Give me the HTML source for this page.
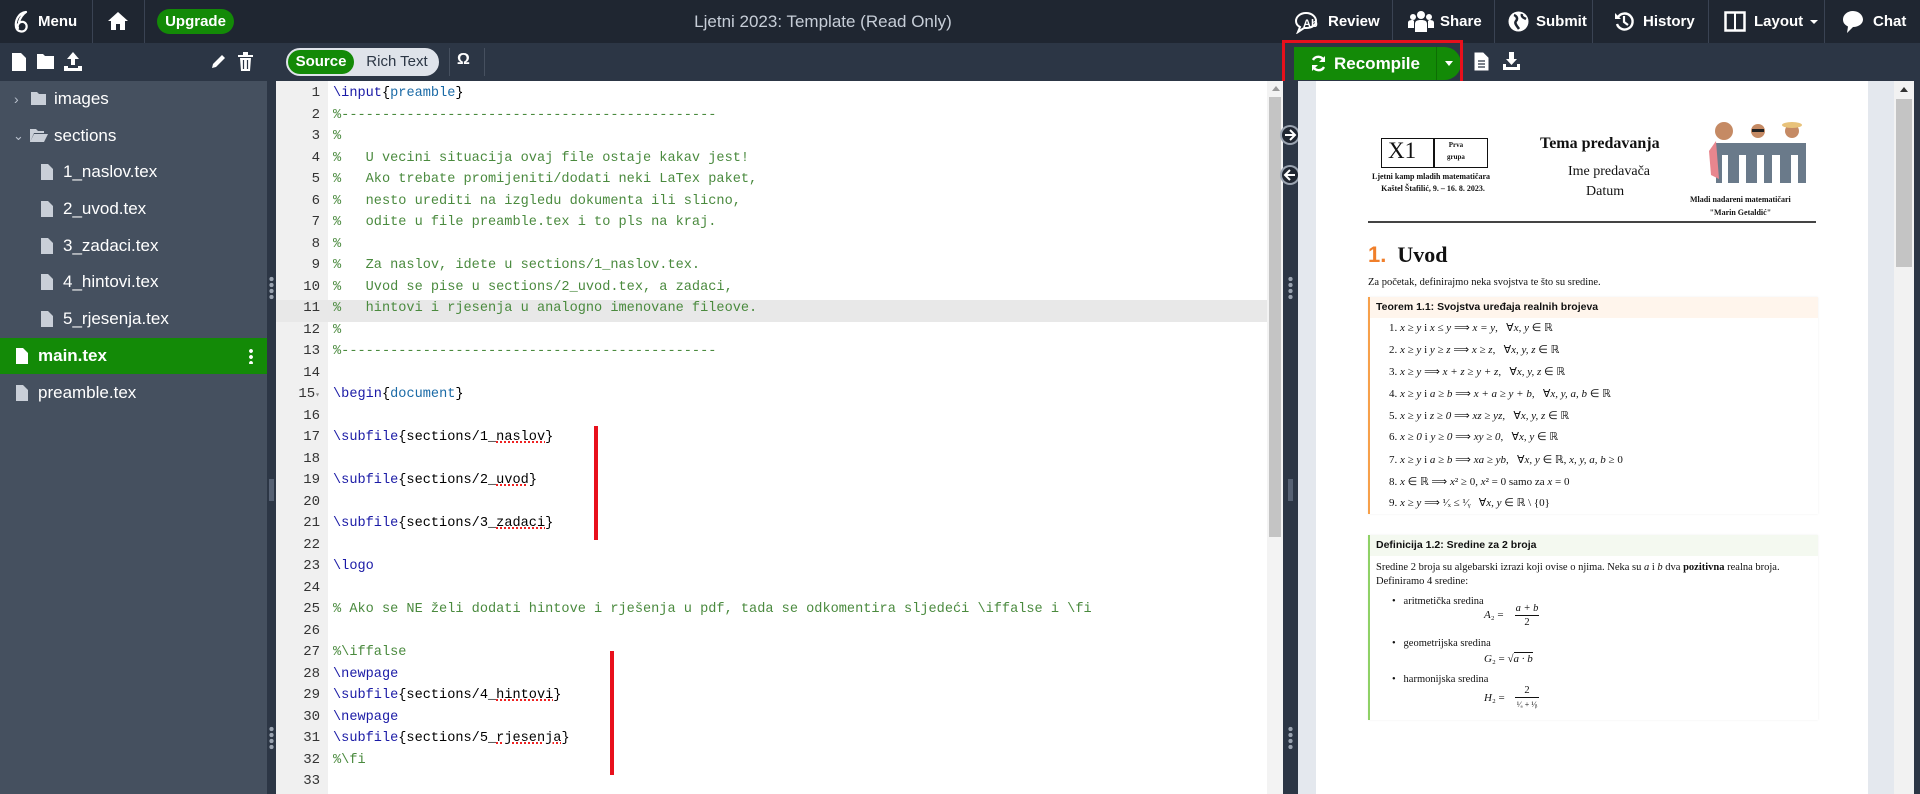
<!DOCTYPE html>
<html><head><meta charset="utf-8"><style>
*{margin:0;padding:0;box-sizing:border-box}
body{width:1920px;height:794px;overflow:hidden;font-family:"Liberation Sans","DejaVu Sans",sans-serif;background:#2c3645;position:relative}
.abs{position:absolute}
#top{left:0;top:0;width:1920px;height:43px;background:#1f2631;color:#fff}
#top .t{position:absolute;top:0;height:43px;line-height:43px;font-size:15px;font-weight:bold}
.sep{position:absolute;top:0;width:1px;height:43px;background:#3a4353}
#tb{left:0;top:43px;width:1920px;height:38px;background:#2c3645}
#side{left:0;top:81px;width:267px;height:713px;background:#45505f;color:#fff}
.row{position:absolute;left:0;width:267px;height:36px;line-height:36px;font-size:17px}
#handle{left:267px;top:81px;width:9px;height:713px;background:#2c3645}
#gut{left:276px;top:81px;width:52px;height:713px;background:#f0f0f0}
#ed{left:328px;top:81px;width:939px;height:713px;background:#fff}
.ln{position:absolute;left:276px;width:44px;text-align:right;font-family:"Liberation Mono",monospace;font-size:14px;color:#333;height:21.5px;line-height:21.5px}
.cl{position:absolute;left:333px;font-family:"Liberation Mono",monospace;font-size:13.6px;height:21.5px;line-height:21.5px;white-space:pre;color:#000}
.cm{color:#4a8a3e}.kw{color:#1a1aa6}.ar{color:#1a6aa6}
.sq{text-decoration:underline dotted #e22;text-decoration-thickness:2px}
#esb{left:1267px;top:81px;width:16px;height:713px;background:#f3f3f3}
#div{left:1283px;top:81px;width:15px;height:713px;background:#2c3645}
#pdf{left:1298px;top:81px;width:622px;height:713px;background:#e4e8ee}
#page{left:1316px;top:81px;width:552px;height:713px;background:#fff;font-family:"Liberation Serif",serif;color:#111}
.p{position:absolute;font-size:11px;white-space:nowrap}
.m{font-style:italic}
</style></head><body>

<div id="top" class="abs">
 <svg class="abs" style="left:12px;top:10px" width="20" height="24" viewBox="0 0 20 24"><path d="M14 2C6 3 3 11 4 17c1 5 8 6 10 2 2-4-1-8-5-7-3 1-4 4-3 6M14 2c-3 2-6 6-7 10" fill="none" stroke="#fff" stroke-width="2.2" stroke-linecap="round"/></svg>
 <div class="t" style="left:38px">Menu</div>
 <div class="sep" style="left:92px"></div>
 <svg class="abs" style="left:107px;top:11px" width="22" height="20" viewBox="0 0 22 20"><path d="M11 1L1 10h3v9h5v-6h4v6h5v-9h3z" fill="#fff"/></svg>
 <div class="sep" style="left:144px"></div>
 <div class="abs" style="left:157px;top:9px;width:77px;height:25px;border-radius:13px;background:#138a07;color:#fff;font-weight:bold;font-size:15px;line-height:25px;text-align:center">Upgrade</div>
 <div class="t" style="left:623px;width:400px;text-align:center;font-weight:normal;color:#c7ced8;font-size:17px">Ljetni 2023: Template (Read Only)</div>
 <div class="sep" style="left:1392px"></div><div class="sep" style="left:1494px"></div><div class="sep" style="left:1592px"></div><div class="sep" style="left:1708px"></div><div class="sep" style="left:1824px"></div>
 <svg class="abs" style="left:1294px;top:10px" width="24" height="24" viewBox="0 0 24 24"><path d="M12 3C6 3 2 7 2 11c0 3 2 5 4 6l-2 5 6-4h2c6 0 10-3 10-7S18 3 12 3z" fill="none" stroke="#fff" stroke-width="2"/><text x="9" y="17" font-size="11" fill="#fff" font-family="Liberation Sans" font-weight="bold">Ab</text></svg>
 <div class="t" style="left:1328px">Review</div>
 <svg class="abs" style="left:1408px;top:10px" width="26" height="22" viewBox="0 0 26 22"><circle cx="13" cy="5" r="4" fill="#fff"/><circle cx="5" cy="7" r="3" fill="#fff"/><circle cx="21" cy="7" r="3" fill="#fff"/><path d="M7 22v-8c0-3 2-4 6-4s6 1 6 4v8zM0 18v-5c0-2 1-3 5-3l1 1v7zM26 18v-5c0-2-1-3-5-3l-1 1v7z" fill="#fff"/></svg>
 <div class="t" style="left:1440px">Share</div>
 <svg class="abs" style="left:1508px;top:11px" width="21" height="21" viewBox="0 0 21 21"><circle cx="10.5" cy="10.5" r="10" fill="#fff"/><path d="M6 4c3 1 4 4 2 6s1 5 3 8M14 3c-1 3 2 4 4 5" fill="none" stroke="#1f2631" stroke-width="2.5"/></svg>
 <div class="t" style="left:1536px">Submit</div>
 <svg class="abs" style="left:1614px;top:11px" width="21" height="21" viewBox="0 0 21 21"><path d="M4 6a8 8 0 1 1-1 7" fill="none" stroke="#fff" stroke-width="2.4"/><path d="M1 2v6h6z" fill="#fff"/><path d="M10 5v6l4 3" fill="none" stroke="#fff" stroke-width="2.2"/></svg>
 <div class="t" style="left:1643px">History</div>
 <svg class="abs" style="left:1724px;top:11px" width="22" height="21" viewBox="0 0 22 21"><rect x="1.5" y="1.5" width="19" height="18" fill="none" stroke="#fff" stroke-width="2.5"/><rect x="10" y="2" width="2" height="17" fill="#fff"/></svg>
 <div class="t" style="left:1754px">Layout</div>
 <div class="abs" style="left:1810px;top:20px;border-left:4px solid transparent;border-right:4px solid transparent;border-top:4px solid #fff"></div>
 <svg class="abs" style="left:1842px;top:10px" width="22" height="24" viewBox="0 0 22 24"><path d="M11 1C5 1 1 5 1 9.5 1 13 3 15 6 16.5L5 23l6-6c6 0 10-3.5 10-7.5S17 1 11 1z" fill="#fff"/></svg>
 <div class="t" style="left:1873px">Chat</div>
</div>

<div id="tb" class="abs">
 <svg class="abs" style="left:12px;top:10px" width="14" height="18" viewBox="0 0 14 18"><path d="M0 0h9l5 5v13H0z" fill="#fff"/></svg>
 <svg class="abs" style="left:37px;top:10px" width="17" height="16" viewBox="0 0 17 16"><path d="M0 1h6l2 2h9v13H0z" fill="#fff"/></svg>
 <svg class="abs" style="left:64px;top:9px" width="18" height="19" viewBox="0 0 18 19"><path d="M9 0l6 7h-4v6H7V7H3zM0 14h4v2h10v-2h4v5H0z" fill="#fff"/></svg>
 <svg class="abs" style="left:210px;top:11px" width="16" height="16" viewBox="0 0 16 16"><path d="M12 1l3 3-9 9-4 1 1-4z" fill="#fff"/></svg>
 <svg class="abs" style="left:238px;top:9px" width="15" height="19" viewBox="0 0 15 19"><path d="M0 3h15v2H0zM5 0h5v3H5zM2 6h11l-1 13H3z" fill="#fff"/><path d="M5.5 8v9M9.5 8v9" stroke="#2c3645" stroke-width="1.2"/></svg>
 <div class="abs" style="left:286px;top:5px;width:153px;height:28px;border-radius:14px;background:#dfe3ea;border:2px solid #dfe3ea"></div>
 <div class="abs" style="left:288px;top:7px;width:66px;height:24px;border-radius:12px;background:#138a07;color:#fff;font-weight:bold;font-size:15px;line-height:24px;text-align:center">Source</div>
 <div class="abs" style="left:358px;top:7px;width:78px;height:24px;color:#2c3645;font-size:15px;line-height:24px;text-align:center">Rich Text</div>
 <div class="abs" style="left:449px;top:5px;width:1px;height:28px;background:#46505f"></div>
 <div class="abs" style="left:457px;top:8px;color:#fff;font-weight:bold;font-size:16px">Ω</div>
 <div class="abs" style="left:484px;top:5px;width:1px;height:28px;background:#46505f"></div>
 <div class="abs" style="left:1294px;top:4px;width:167px;height:33px;border-radius:0 17px 17px 0;background:#138a07"></div>
 <div class="abs" style="left:1436px;top:4px;width:1px;height:33px;background:#0d6e04"></div>
 <svg class="abs" style="left:1310px;top:12px" width="17" height="17" viewBox="0 0 17 17"><path d="M14 6A6 6 0 0 0 3 5M3 11a6 6 0 0 0 11 1" fill="none" stroke="#fff" stroke-width="2.4"/><path d="M15 1v6H9zM2 16v-6h6z" fill="#fff"/></svg>
 <div class="abs" style="left:1334px;top:4px;height:33px;line-height:33px;color:#fff;font-weight:bold;font-size:17px">Recompile</div>
 <div class="abs" style="left:1445px;top:18px;border-left:4px solid transparent;border-right:4px solid transparent;border-top:5px solid #fff"></div>
 <div class="abs" style="left:1282px;top:-3px;width:181px;height:48px;border:3px solid #e8101c"></div>
 <svg class="abs" style="left:1474px;top:9px" width="15" height="19" viewBox="0 0 15 19"><path d="M1 1h8l5 5v12H1z" fill="#fff" stroke="#fff"/><path d="M4 9h7M4 12h7M4 15h7" stroke="#2c3645" stroke-width="1.3"/></svg>
 <svg class="abs" style="left:1503px;top:9px" width="17" height="18" viewBox="0 0 17 18"><path d="M6 0h5v7h3l-5.5 6L3 7h3zM0 12h3v3h11v-3h3v6H0z" fill="#fff"/></svg>
</div>

<div id="side" class="abs">
 <div class="row" style="top:0"><span style="position:absolute;left:14px;color:#b8c0cc;font-size:14px">›</span><svg style="position:absolute;left:31px;top:11px" width="15" height="13" viewBox="0 0 15 13"><path d="M0 0h6l2 2h7v11H0z" fill="#c9cfd8"/></svg><span style="position:absolute;left:54px">images</span></div>
 <div class="row" style="top:37px"><span style="position:absolute;left:13px;color:#b8c0cc;font-size:13px">⌄</span><svg style="position:absolute;left:30px;top:11px" width="18" height="13" viewBox="0 0 18 13"><path d="M0 0h6l2 2h6v2H4L0 13zM4 5h14l-4 8H0z" fill="#c9cfd8"/></svg><span style="position:absolute;left:54px">sections</span></div>
 <div class="row" style="top:73px"><svg style="position:absolute;left:41px;top:10px" width="12" height="16" viewBox="0 0 12 16"><path d="M0 0h7l5 5v11H0z" fill="#c9cfd8"/></svg><span style="position:absolute;left:63px">1_naslov.tex</span></div>
 <div class="row" style="top:110px"><svg style="position:absolute;left:41px;top:10px" width="12" height="16" viewBox="0 0 12 16"><path d="M0 0h7l5 5v11H0z" fill="#c9cfd8"/></svg><span style="position:absolute;left:63px">2_uvod.tex</span></div>
 <div class="row" style="top:147px"><svg style="position:absolute;left:41px;top:10px" width="12" height="16" viewBox="0 0 12 16"><path d="M0 0h7l5 5v11H0z" fill="#c9cfd8"/></svg><span style="position:absolute;left:63px">3_zadaci.tex</span></div>
 <div class="row" style="top:183px"><svg style="position:absolute;left:41px;top:10px" width="12" height="16" viewBox="0 0 12 16"><path d="M0 0h7l5 5v11H0z" fill="#c9cfd8"/></svg><span style="position:absolute;left:63px">4_hintovi.tex</span></div>
 <div class="row" style="top:220px"><svg style="position:absolute;left:41px;top:10px" width="12" height="16" viewBox="0 0 12 16"><path d="M0 0h7l5 5v11H0z" fill="#c9cfd8"/></svg><span style="position:absolute;left:63px">5_rjesenja.tex</span></div>
 <div class="row" style="top:257px;height:36px;background:#138a07;font-weight:bold"><svg style="position:absolute;left:16px;top:10px" width="12" height="16" viewBox="0 0 12 16"><path d="M0 0h7l5 5v11H0z" fill="#fff"/></svg><span style="position:absolute;left:38px">main.tex</span><span style="position:absolute;left:249px;top:10px;width:4px;height:16px;background:radial-gradient(circle,#fff 1.8px,transparent 2px) 0 0/4px 6px"></span></div>
 <div class="row" style="top:294px"><svg style="position:absolute;left:16px;top:10px" width="12" height="16" viewBox="0 0 12 16"><path d="M0 0h7l5 5v11H0z" fill="#c9cfd8"/></svg><span style="position:absolute;left:38px">preamble.tex</span></div>
</div>
<div id="handle" class="abs"><div class="abs" style="left:2px;top:195px;width:5px;height:24px;background:radial-gradient(circle,#9aa3b0 2px,transparent 2.3px) 0 0/5px 6px"></div><div class="abs" style="left:2px;top:398px;width:5px;height:22px;background:#566173"></div><div class="abs" style="left:2px;top:645px;width:5px;height:24px;background:radial-gradient(circle,#9aa3b0 2px,transparent 2.3px) 0 0/5px 6px"></div></div>

<div id="gut" class="abs"></div>
<div id="ed" class="abs"></div>
<div class="abs" style="left:276px;top:300px;width:991px;height:22px;background:#e8e8e8"></div>

<div class="ln" style="top:83px">1</div><div class="cl" style="top:83px"><span class="kw">\input</span>{<span class="ar">preamble</span>}</div>
<div class="ln" style="top:105px">2</div><div class="cl cm" style="top:105px">%----------------------------------------------</div>
<div class="ln" style="top:126px">3</div><div class="cl cm" style="top:126px">%</div>
<div class="ln" style="top:148px">4</div><div class="cl cm" style="top:148px">%   U vecini situacija ovaj file ostaje kakav jest!</div>
<div class="ln" style="top:169px">5</div><div class="cl cm" style="top:169px">%   Ako trebate promijeniti/dodati neki LaTex paket,</div>
<div class="ln" style="top:191px">6</div><div class="cl cm" style="top:191px">%   nesto urediti na izgledu dokumenta ili slicno,</div>
<div class="ln" style="top:212px">7</div><div class="cl cm" style="top:212px">%   odite u file preamble.tex i to pls na kraj.</div>
<div class="ln" style="top:234px">8</div><div class="cl cm" style="top:234px">%</div>
<div class="ln" style="top:255px">9</div><div class="cl cm" style="top:255px">%   Za naslov, idete u sections/1_naslov.tex.</div>
<div class="ln" style="top:277px">10</div><div class="cl cm" style="top:277px">%   Uvod se pise u sections/2_uvod.tex, a zadaci,</div>
<div class="ln" style="top:298px">11</div><div class="cl cm" style="top:298px">%   hintovi i rjesenja u analogno imenovane fileove.</div>
<div class="ln" style="top:320px">12</div><div class="cl cm" style="top:320px">%</div>
<div class="ln" style="top:341px">13</div><div class="cl cm" style="top:341px">%----------------------------------------------</div>
<div class="ln" style="top:363px">14</div>
<div class="ln" style="top:384px">15<span style="font-size:8px;color:#888">▾</span></div><div class="cl" style="top:384px"><span class="kw">\begin</span>{<span class="ar">document</span>}</div>
<div class="ln" style="top:406px">16</div>
<div class="ln" style="top:427px">17</div><div class="cl" style="top:427px"><span class="kw">\subfile</span>{sections/1_<span class="sq">naslov</span>}</div>
<div class="ln" style="top:449px">18</div>
<div class="ln" style="top:470px">19</div><div class="cl" style="top:470px"><span class="kw">\subfile</span>{sections/2_<span class="sq">uvod</span>}</div>
<div class="ln" style="top:492px">20</div>
<div class="ln" style="top:513px">21</div><div class="cl" style="top:513px"><span class="kw">\subfile</span>{sections/3_<span class="sq">zadaci</span>}</div>
<div class="ln" style="top:535px">22</div>
<div class="ln" style="top:556px">23</div><div class="cl" style="top:556px"><span class="kw">\logo</span></div>
<div class="ln" style="top:578px">24</div>
<div class="ln" style="top:599px">25</div><div class="cl cm" style="top:599px">% Ako se NE želi dodati hintove i rješenja u pdf, tada se odkomentira sljedeći \iffalse i \fi</div>
<div class="ln" style="top:621px">26</div>
<div class="ln" style="top:642px">27</div><div class="cl cm" style="top:642px">%\iffalse</div>
<div class="ln" style="top:664px">28</div><div class="cl" style="top:664px"><span class="kw">\newpage</span></div>
<div class="ln" style="top:685px">29</div><div class="cl" style="top:685px"><span class="kw">\subfile</span>{sections/4_<span class="sq">hintovi</span>}</div>
<div class="ln" style="top:707px">30</div><div class="cl" style="top:707px"><span class="kw">\newpage</span></div>
<div class="ln" style="top:728px">31</div><div class="cl" style="top:728px"><span class="kw">\subfile</span>{sections/5_<span class="sq">rjesenja</span>}</div>
<div class="ln" style="top:750px">32</div><div class="cl cm" style="top:750px">%\fi</div>
<div class="ln" style="top:771px">33</div>

<div class="abs" style="left:594px;top:426px;width:4px;height:114px;background:#e8101c"></div>
<div class="abs" style="left:610px;top:651px;width:4px;height:124px;background:#e8101c"></div>

<div id="esb" class="abs"><div class="abs" style="left:5px;top:5px;border-left:4px solid transparent;border-right:4px solid transparent;border-bottom:5px solid #999"></div><div class="abs" style="left:2px;top:16px;width:12px;height:440px;background:#c4c4c4"></div></div>
<div id="div" class="abs">
 <svg class="abs" style="left:-4px;top:43px" width="22" height="22" viewBox="0 0 22 22"><circle cx="11" cy="11" r="10" fill="#9aa3b0"/><circle cx="11" cy="11" r="8" fill="#1f2631"/><path d="M6 11h9M11 6l5 5-5 5" fill="none" stroke="#fff" stroke-width="2"/></svg>
 <svg class="abs" style="left:-4px;top:83px" width="22" height="22" viewBox="0 0 22 22"><circle cx="11" cy="11" r="10" fill="#9aa3b0"/><circle cx="11" cy="11" r="8" fill="#1f2631"/><path d="M16 11H7M11 6l-5 5 5 5" fill="none" stroke="#fff" stroke-width="2"/></svg>
 <div class="abs" style="left:5px;top:195px;width:5px;height:24px;background:radial-gradient(circle,#9aa3b0 2px,transparent 2.3px) 0 0/5px 6px"></div>
 <div class="abs" style="left:5px;top:398px;width:5px;height:22px;background:#566173"></div>
 <div class="abs" style="left:5px;top:645px;width:5px;height:24px;background:radial-gradient(circle,#9aa3b0 2px,transparent 2.3px) 0 0/5px 6px"></div>
</div>
<div id="pdf" class="abs"><div class="abs" style="left:596px;top:0;width:20px;height:713px;background:#f2f2f2"></div><div class="abs" style="left:602px;top:6px;border-left:4px solid transparent;border-right:4px solid transparent;border-bottom:5px solid #333"></div><div class="abs" style="left:598px;top:18px;width:16px;height:168px;background:#c4c4c4"></div><div class="abs" style="left:616px;top:0;width:6px;height:713px;background:#2c3645"></div></div>

<div id="page" class="abs">
 <div class="abs" style="left:65px;top:57px;width:107px;height:30px;border:1.5px solid #111"></div>
 <div class="abs" style="left:117px;top:57px;width:1.5px;height:30px;background:#111"></div>
 <div class="p" style="left:72px;top:57px;font-size:23px">X1</div>
 <div class="p" style="left:131px;top:58px;font-size:7px;text-align:center;line-height:12px;font-weight:bold">Prva<br>grupa</div>
 <div class="p" style="left:56px;top:90px;font-size:8px;font-weight:bold;text-align:center;line-height:12px">Ljetni kamp mladih matematičara<br>&nbsp;&nbsp;Kaštel Štafilić, 9. – 16. 8. 2023.</div>
 <div class="p" style="left:224px;top:54px;font-size:16px;font-weight:bold">Tema predavanja</div>
 <div class="p" style="left:252px;top:83px;font-size:14px">Ime predavača</div>
 <div class="p" style="left:270px;top:103px;font-size:14px">Datum</div>
 <svg class="abs" style="left:386px;top:38px" width="112" height="70" viewBox="0 0 112 70"><circle cx="22" cy="12" r="9" fill="#c58a64"/><circle cx="56" cy="12" r="7" fill="#c58a64"/><rect x="50" y="10" width="12" height="3" fill="#222"/><circle cx="90" cy="12" r="7" fill="#c58a64"/><ellipse cx="90" cy="6" rx="10" ry="3" fill="#e8c27a"/><path d="M14 24h90v40h-8V36h-7v28H78V36h-8v28h-8V36h-7v28H44V36h-7v28H26V36h-6v28h-6z" fill="#6a7a8a"/><path d="M14 22l-7 10 2 24 8 4z" fill="#e8868e"/></svg>
 <div class="p" style="left:374px;top:112px;font-size:8px;font-weight:bold;text-align:center;line-height:13px">Mladi nadareni matematičari<br>"Marin Getaldić"</div>
 <div class="abs" style="left:52px;top:140px;width:448px;height:2px;background:#444"></div>
 <div class="p" style="left:52px;top:161px;font-size:22px;font-weight:bold"><span style="color:#f07f2a;font-family:'Liberation Sans',sans-serif">1.</span>&nbsp; Uvod</div>
 <div class="p" style="left:52px;top:196px;font-size:10.5px">Za početak, definirajmo neka svojstva te što su sredine.</div>
 <div class="abs" style="left:52px;top:216px;width:450px;height:217px;border-left:2px solid #f7a04a;background:#fff;box-shadow:0 0 2px #eee"></div>
 <div class="abs" style="left:54px;top:216px;width:448px;height:21px;background:#fff5ec"></div>
 <div class="p" style="left:60px;top:220px;font-family:'Liberation Sans',sans-serif;font-weight:bold;font-size:10.5px">Teorem 1.1: Svojstva uređaja realnih brojeva</div>
 <div class="p" style="left:73px;top:240px">1. <span class="m">x ≥ y</span> i <span class="m">x ≤ y</span> ⟹ <span class="m">x = y</span>, &nbsp; ∀<span class="m">x, y</span> ∈ ℝ</div>
 <div class="p" style="left:73px;top:262px">2. <span class="m">x ≥ y</span> i <span class="m">y ≥ z</span> ⟹ <span class="m">x ≥ z</span>, &nbsp; ∀<span class="m">x, y, z</span> ∈ ℝ</div>
 <div class="p" style="left:73px;top:284px">3. <span class="m">x ≥ y</span> ⟹ <span class="m">x + z ≥ y + z</span>, &nbsp; ∀<span class="m">x, y, z</span> ∈ ℝ</div>
 <div class="p" style="left:73px;top:306px">4. <span class="m">x ≥ y</span> i <span class="m">a ≥ b</span> ⟹ <span class="m">x + a ≥ y + b</span>, &nbsp; ∀<span class="m">x, y, a, b</span> ∈ ℝ</div>
 <div class="p" style="left:73px;top:328px">5. <span class="m">x ≥ y</span> i <span class="m">z ≥ 0</span> ⟹ <span class="m">xz ≥ yz</span>, &nbsp; ∀<span class="m">x, y, z</span> ∈ ℝ</div>
 <div class="p" style="left:73px;top:349px">6. <span class="m">x ≥ 0</span> i <span class="m">y ≥ 0</span> ⟹ <span class="m">xy ≥ 0</span>, &nbsp; ∀<span class="m">x, y</span> ∈ ℝ</div>
 <div class="p" style="left:73px;top:372px">7. <span class="m">x ≥ y</span> i <span class="m">a ≥ b</span> ⟹ <span class="m">xa ≥ yb</span>, &nbsp; ∀<span class="m">x, y</span> ∈ ℝ, <span class="m">x, y, a, b</span> ≥ 0</div>
 <div class="p" style="left:73px;top:394px">8. <span class="m">x</span> ∈ ℝ ⟹ <span class="m">x</span>² ≥ 0, <span class="m">x</span>² = 0 samo za <span class="m">x</span> = 0</div>
 <div class="p" style="left:73px;top:415px">9. <span class="m">x ≥ y</span> ⟹ ¹⁄ₓ ≤ ¹⁄ᵧ &nbsp; ∀<span class="m">x, y</span> ∈ ℝ \ {0}</div>
 <div class="abs" style="left:52px;top:454px;width:450px;height:185px;border-left:2px solid #8fd166;box-shadow:0 0 2px #eee"></div>
 <div class="abs" style="left:54px;top:454px;width:448px;height:21px;background:#f4f9f0"></div>
 <div class="p" style="left:60px;top:458px;font-family:'Liberation Sans',sans-serif;font-weight:bold;font-size:10.5px">Definicija 1.2: Sredine za 2 broja</div>
 <div class="p" style="left:60px;top:480px;font-size:10.5px;line-height:14px">Sredine 2 broja su algebarski izrazi koji ovise o njima. Neka su <span class="m">a</span> i <span class="m">b</span> dva <b>pozitivna</b> realna broja.<br>Definiramo 4 sredine:</div>
 <div class="p" style="left:76px;top:515px;font-size:10.5px">•&nbsp;&nbsp; aritmetička sredina</div>
 <div class="p" style="left:168px;top:528px;font-size:11px"><span class="m">A</span>₂ =</div>
 <div class="p" style="left:198px;top:521px;font-size:10.5px;text-align:center;width:26px;line-height:13px"><span class="m">a + b</span><br><span style="border-top:1px solid #111;display:inline-block;width:24px">2</span></div>
 <div class="p" style="left:76px;top:557px;font-size:10.5px">•&nbsp;&nbsp; geometrijska sredina</div>
 <div class="p" style="left:168px;top:572px;font-size:11px"><span class="m">G</span>₂ = √<span style="border-top:1px solid #111" class="m">a · b</span></div>
 <div class="p" style="left:76px;top:593px;font-size:10.5px">•&nbsp;&nbsp; harmonijska sredina</div>
 <div class="p" style="left:168px;top:611px;font-size:11px"><span class="m">H</span>₂ =</div>
 <div class="p" style="left:198px;top:603px;font-size:10.5px;text-align:center;width:26px;line-height:13px">2<br><span style="border-top:1px solid #111;display:inline-block;width:24px;font-size:8px">¹⁄ₐ + ¹⁄ᵦ</span></div>
</div>
</body></html>
